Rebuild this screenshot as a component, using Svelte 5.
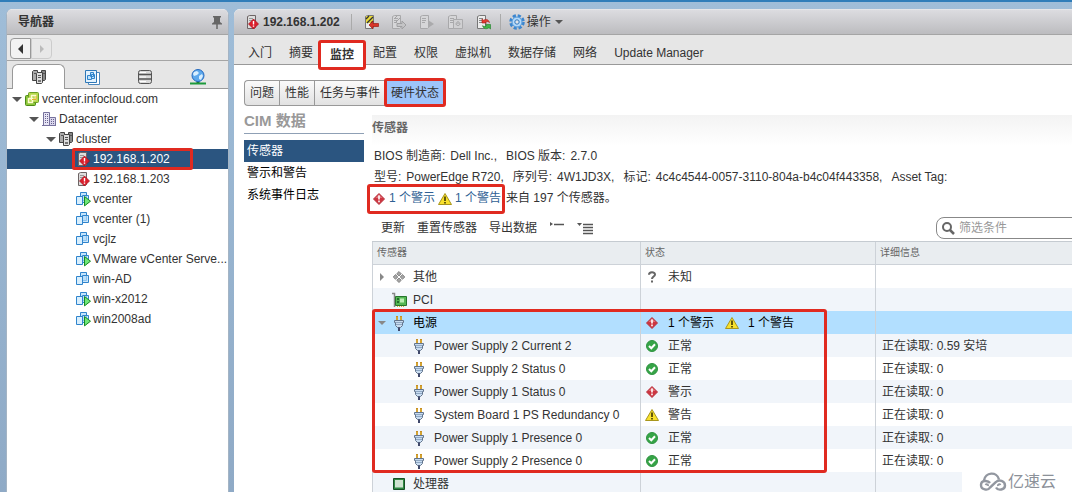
<script lang="ts">
	type TreeNode = {
		name: string;
		icon: string;
		level: number;
		open?: boolean;
	};

	type Sensor = {
		name: string;
		icon: string;
		child?: boolean;
		open?: boolean;
		status: { icon: string; text: string }[];
		detail?: string;
	};

	let selectedNode = $state('192.168.1.202');
	let selectedView = $state('传感器');
	let activeTab = $state('监控');
	let activeSub = $state('硬件状态');
	let activeNav = $state('hosts');
	let selectedSensor = $state('电源');
	let filter = $state('');

	const navTabs = [
		{ id: 'hosts', icon: 'cluster', label: '主机和群集' },
		{ id: 'vms', icon: 'vms', label: '虚拟机和模板' },
		{ id: 'storage', icon: 'storage', label: '存储' },
		{ id: 'network', icon: 'network', label: '网络' }
	];

	const tree: TreeNode[] = [
		{ name: 'vcenter.infocloud.com', icon: 'vcenter', level: 0, open: true },
		{ name: 'Datacenter', icon: 'datacenter', level: 1, open: true },
		{ name: 'cluster', icon: 'cluster', level: 2, open: true },
		{ name: '192.168.1.202', icon: 'host', level: 3 },
		{ name: '192.168.1.203', icon: 'host', level: 3 },
		{ name: 'vcenter', icon: 'vm-on', level: 3 },
		{ name: 'vcenter (1)', icon: 'vm', level: 3 },
		{ name: 'vcjlz', icon: 'vm', level: 3 },
		{ name: 'VMware vCenter Serve...', icon: 'vm-on', level: 3 },
		{ name: 'win-AD', icon: 'vm', level: 3 },
		{ name: 'win-x2012', icon: 'vm-on', level: 3 },
		{ name: 'win2008ad', icon: 'vm-on', level: 3 }
	];

	const actions = [
		{ icon: 'maint-enter', label: '进入维护模式' },
		{ icon: 'maint-exit', label: '退出维护模式' },
		{ icon: 'power-on', label: '打开电源' },
		{ icon: 'power-off', label: '关机' },
		{ icon: 'reboot', label: '重新引导' }
	];

	const tabs = ['入门', '摘要', '监控', '配置', '权限', '虚拟机', '数据存储', '网络', 'Update Manager'];
	const subTabs = ['问题', '性能', '任务与事件', '硬件状态'];
	const views = ['传感器', '警示和警告', '系统事件日志'];

	const ok = [{ icon: 'ok', text: '正常' }];

	const sensors: Sensor[] = [
		{ name: '其他', icon: 'other', open: false, status: [{ icon: 'unknown', text: '未知' }] },
		{ name: 'PCI', icon: 'pci', status: [] },
		{
			name: '电源',
			icon: 'plug',
			open: true,
			status: [
				{ icon: 'alert', text: '1 个警示' },
				{ icon: 'warning', text: '1 个警告' }
			]
		},
		{ name: 'Power Supply 2 Current 2', icon: 'plug', child: true, status: ok, detail: '正在读取: 0.59 安培' },
		{ name: 'Power Supply 2 Status 0', icon: 'plug', child: true, status: ok, detail: '正在读取: 0' },
		{
			name: 'Power Supply 1 Status 0',
			icon: 'plug',
			child: true,
			status: [{ icon: 'alert', text: '警示' }],
			detail: '正在读取: 0'
		},
		{
			name: 'System Board 1 PS Redundancy 0',
			icon: 'plug',
			child: true,
			status: [{ icon: 'warning', text: '警告' }],
			detail: '正在读取: 0'
		},
		{ name: 'Power Supply 1 Presence 0', icon: 'plug', child: true, status: ok, detail: '正在读取: 0' },
		{ name: 'Power Supply 2 Presence 0', icon: 'plug', child: true, status: ok, detail: '正在读取: 0' },
		{ name: '处理器', icon: 'cpu', status: [] }
	];
</script>

{#snippet squares()}
	<g stroke="#2f84cc">
		<path d="M5.5 1.5h6v8h-6z" fill="#c4e4fb" />
		<path d="M1.5 5.5h6v8h-6z" fill="#d8eefc" />
		<path d="M7.5 4.5h6v7h-6z" fill="#b3dbfa" fill-opacity=".7" />
	</g>
{/snippet}

{#snippet server()}
	<path d="M2.5 2.5l2-1h6v12l-1 1h-7z" fill="#ececec" stroke="#777" />
	<path d="M4 4.5h4M4 6.5h4M4 8.5h3" stroke="#888" />
{/snippet}

{#snippet paleServer()}
	<path d="M1.5 2.5l2-1h6v12l-1 1h-7z" fill="#d6d6d8" stroke="#a8a8aa" />
	<path d="M3 4.5h4M3 6.5h4M3 8.5h3" stroke="#a8a8aa" />
{/snippet}

{#snippet icon(name: string)}
	<svg class="icon" viewBox="0 0 16 16" width="16" height="16" fill="none" aria-hidden="true">
		{#if name === 'host'}
			<path d="M3.5 2.5l2-1h6v12l-1 1h-7z" fill="#ddd" stroke="#6d6464" />
			<path d="M5 4.5h4M5 6.5h4" stroke="#999" />
			<path d="M9.500 5l5 5-5 5-5-5z" fill="#dc1f2c" stroke="#a30f1b" stroke-width=".7" />
			<path d="M8.800 7h1.400v3.500H8.800zM8.800 11.500h1.400v1.300H8.800z" fill="#fff" />
		{:else if name === 'vm' || name === 'vm-on'}
			{@render squares()}
			{#if name === 'vm-on'}
				<path d="M9.5 5.500l6 4.700-6 4.700z" fill="#6fe578" stroke="#168a24" />
			{/if}
		{:else if name === 'vcenter'}
			<rect x="1.500" y="4.500" width="10" height="10" rx="1" fill="#8cc63a" stroke="#4c8a17" />
			<rect x="4.500" y="1.500" width="10" height="10" rx="1" fill="#b5d84c" stroke="#6b9e24" />
			<path d="M7.500 4.500h4v4h-4zM4.500 7.500h4v4h-4z" stroke="#fffbd0" stroke-width="1.500" />
			<path d="M8 8.500h4v-3.500" stroke="#e7a92b" />
		{:else if name === 'datacenter'}
			<path d="M2.500 1.500h6v13h-6z" fill="#e7e5f5" stroke="#77729d" />
			<path d="M8.500 6.500h6v8h-6z" fill="#d9d6ec" stroke="#77729d" />
			<path d="M4.500 3v10M6.500 3v10M10.500 8v5M12.500 8v5" stroke="#68628f" stroke-dasharray="1 1" />
			<path d="M1 14.500h14" stroke="#77729d" />
		{:else if name === 'cluster'}
			<g stroke="#444">
				<path d="M1.500 2.500l1-1h4v9l-1 1h-4z" fill="#aaa" />
				<path d="M10.500 1.500h4v9l-1 1h-3z" fill="#888" />
				<path d="M5.500 4.500l1-1h5v10l-1 1h-5z" fill="#ddd" />
			</g>
			<path d="M7 6.500h3M7 8.500h3M3 4.500h2M12 4.500h2" stroke="#555" />
			<path d="M7 11h3v2H7z" fill="#777" />
		{:else if name === 'vms'}
			<path d="M4.500 3.500h11v12h-11z" fill="#fff" stroke="#4a87bd" />
			<path d="M1.500 1.500h11v12h-11z" fill="#e3f2fd" stroke="#2f78b7" />
			<path d="M6.500 3.500h3v4h-3zM3.500 6.500h4v4h-4zM7.500 5.500h3v4h-3z" fill="#bfe2fb" stroke="#2f84cc" />
		{:else if name === 'storage'}
			<rect x="1.500" y="1.500" width="13" height="13" rx="2" fill="#d9d9d9" stroke="#555" />
			<path d="M2 5.500h12M2 10h12" stroke="#555" stroke-width="1.500" />
			<path d="M3 3.500h6M3 8h6M3 12.500h6" stroke="#fff" />
		{:else if name === 'network'}
			<path d="M0 14.500h16" stroke="#1d9a3c" stroke-width="2" />
			<path d="M8 11v3" stroke="#1d7a3c" stroke-width="3" />
			<circle cx="8" cy="6.500" r="6" fill="#5da8ec" stroke="#2468bd" />
			<path d="M4 3l3-1 2 2-2 2-3 1-1-2zM9 7l3-2 1 2-2 4-2-1z" fill="#d9efff" />
		{:else if name === 'alert'}
			<path d="M8 2.500L13.500 8 8 13.500 2.500 8z" fill="#cd3540" stroke="#b8323c" />
			<path d="M8 3.500L11.500 7h-7z" fill="#e2737a" />
			<path d="M7.200 4.500h1.600v4H7.200zM7.200 9.500h1.600v1.700H7.200z" fill="#fff" />
		{:else if name === 'warning'}
			<path d="M8 2.500l6.500 11h-13z" fill="#f8e02c" stroke="#a8961c" stroke-linejoin="round" />
			<path d="M7.200 5.500h1.600v4.500H7.200zM7.200 11h1.600v1.500H7.200z" fill="#3d3500" />
		{:else if name === 'ok'}
			<circle cx="8" cy="8" r="5.500" fill="#36a447" stroke="#2f9441" />
			<path d="M5 8l2.300 2.300 3.700-4" stroke="#fff" stroke-width="2" />
		{:else if name === 'unknown'}
			<path d="M5 5.800C5 2.500 11 2.500 11 5.500 11 7.500 8 7.500 8 10" stroke="#666" stroke-width="2" />
			<path d="M7 11.500h2v2H7z" fill="#666" />
		{:else if name === 'other'}
			<path d="M8 2.500l2.300 2.300L8 7 5.700 4.800zM8 9l2.300 2.300L8 13.500l-2.300-2.200zM4.500 5.500L6.800 8l-2.300 2.300L2.200 8zM11.500 5.500L13.800 8l-2.300 2.300L9.200 8z" fill="#a5a5a5" stroke="#777" stroke-width=".8" />
		{:else if name === 'pci'}
			<path d="M1 1.500h2.500V15" stroke="#888" stroke-width="1.500" />
			<path d="M4.500 4.500h11v9h-11z" fill="#55b753" stroke="#26752b" />
			<path d="M9 6.500h4v4H9z" fill="#b9eeb1" />
			<path d="M6 6h2v2H6zM6 9h2v2H6z" fill="#236b2b" />
			<path d="M6 14.500h8" stroke="#d2b33b" stroke-dasharray="1 1" />
		{:else if name === 'plug'}
			<path d="M6 1v5M10 1v5" stroke="#b77a12" stroke-width="2" />
			<path d="M6 1.500v4M10 1.500v4" stroke="#f2cd52" />
			<path d="M3.500 5.500h9v2h-1v3l-2 2h-3l-2-2v-3h-1z" fill="#c9dcf0" stroke="#62748c" />
			<path d="M5 7.500h6M5 9.500h6" stroke="#8fa8c4" />
			<path d="M8 12.500V16" stroke="#40486a" stroke-width="2" />
		{:else if name === 'cpu'}
			<path d="M2.500 2.500h11v11h-11z" fill="#2e8742" stroke="#174f25" />
			<path d="M4 4h8v7.500H4z" fill="#cfe3d1" />
		{:else if name === 'maint-enter'}
			{@render server()}
			<path d="M3 2h7v7H3z" fill="#e9d93a" />
			<path d="M3 5l3-3M4 9l6-6M8 9l2-2" stroke="#333" stroke-width="1.300" />
			<path d="M6 11l4-4v2.500h5.500v3H10V15z" fill="#d73528" stroke="#9c1d14" stroke-width=".7" />
		{:else if name === 'maint-exit'}
			{@render paleServer()}
			<path d="M3 5l3-3M4 9l5-5" stroke="#a2a2a4" />
			<path d="M15 11l-4-4v2.500H6v3h5V15z" fill="#c4c4c6" stroke="#9f9fa1" />
		{:else if name === 'power-on'}
			{@render paleServer()}
			<path d="M9 6l6 4-6 4z" fill="#aaaaac" />
		{:else if name === 'power-off'}
			{@render paleServer()}
			<path d="M6.500 5.500h9v9h-9z" fill="#d0d0d2" stroke="#ababad" />
			<path d="M9.500 8.500c-2 4 5 4 3 0M11 7v3" stroke="#9f9fa1" />
		{:else if name === 'reboot'}
			{@render server()}
			<path d="M7 9V5l1.500 1.200c3-2 5.500 0 6 2.300-2-1.500-3-1.200-4 0L11.500 9z" fill="#e23b30" stroke="#a81d14" stroke-width=".6" />
			<path d="M15.500 10.500V15l-1.500-1.300c-3 2-5.500 1-6.500-2 2 1.200 3 1 4-.2l-1-1z" fill="#42b548" stroke="#1c7d25" stroke-width=".6" />
		{:else if name === 'gear'}
			<circle cx="8" cy="8" r="6.500" stroke="#3b86cf" stroke-width="2.500" stroke-dasharray="3.200 1.900" />
			<circle cx="8" cy="8" r="5" fill="#b5dafa" stroke="#4a95da" />
			<circle cx="8" cy="8" r="2.200" fill="#e0e4ea" stroke="#2e78bf" />
		{:else if name === 'pin'}
			<path d="M4 2h8v1.500h-1V8l2 1.500v1H3v-1L5 8V3.500H4z" fill="#666" />
			<path d="M8 10v5" stroke="#666" stroke-width="1.500" />
		{:else if name === 'search'}
			<circle cx="7" cy="7" r="4" stroke="#666" stroke-width="2" />
			<path d="M10 10l4 4" stroke="#666" stroke-width="2.500" />
		{:else if name === 'collapse'}
			<path d="M1 2l3 2-3 2z" fill="#555" />
			<path d="M5 4.500h10" stroke="#555" stroke-width="1.500" />
		{:else if name === 'expand'}
			<path d="M0 3h5L2.500 6z" fill="#555" />
			<path d="M6 4.500h10M6 7.500h10M6 10.500h10M6 13.500h10" stroke="#555" stroke-width="1.500" />
		{/if}
	</svg>
{/snippet}

<div class="app">
	<aside class="panel navigator">
		<header class="panel-header">
			<h2>导航器</h2>
			<button class="plain" aria-label="固定">{@render icon('pin')}</button>
		</header>
		<div class="history">
			<button aria-label="后退"><span class="tri left"></span></button>
			<button aria-label="前进" disabled><span class="tri right"></span></button>
		</div>
		<nav class="nav-tabs">
			{#each navTabs as tab}
				<button class:active={activeNav === tab.id} aria-label={tab.label} onclick={() => (activeNav = tab.id)}>
					{@render icon(tab.icon)}
				</button>
			{/each}
		</nav>
		<ul class="tree">
			{#each tree as node}
				<li class="level-{node.level}" class:selected={selectedNode === node.name}>
					{#if node.open}
						<button class="plain toggle" aria-label="折叠 {node.name}"><span class="tri down"></span></button>
					{/if}
					<a href="#{node.name}" class:marked={selectedNode === node.name} onclick={() => (selectedNode = node.name)}>
						{@render icon(node.icon)}
						<span>{node.name}</span>
					</a>
				</li>
			{/each}
		</ul>
	</aside>

	<main class="panel">
		<header class="panel-header object-header">
			<div class="object-title">
				{@render icon('host')}
				<h1>192.168.1.202</h1>
			</div>
			<div class="actions">
				{#each actions as action}
					<button class="plain" aria-label={action.label}>{@render icon(action.icon)}</button>
				{/each}
			</div>
			<button class="plain action-menu">{@render icon('gear')}操作<span class="tri down"></span></button>
		</header>

		<nav class="tabs">
			{#each tabs as tab}
				<button class:active={activeTab === tab} onclick={() => (activeTab = tab)}>{tab}</button>
			{/each}
		</nav>

		<nav class="sub-tabs">
			{#each subTabs as tab}
				<button class:active={activeSub === tab} onclick={() => (activeSub = tab)}>{tab}</button>
			{/each}
		</nav>

		<div class="body">
			<section class="views">
				<h2>CIM 数据</h2>
				<ul>
					{#each views as view}
						<li>
							<a href="#{view}" class:selected={selectedView === view} onclick={() => (selectedView = view)}>{view}</a>
						</li>
					{/each}
				</ul>
			</section>

			<section class="content">
				<h3>传感器</h3>
				<div class="info">
					<p><span>BIOS 制造商:</span> <span>Dell Inc.,</span> <span class="next">BIOS 版本:</span> <span>2.7.0</span></p>
					<p>
						<span>型号:</span> <span>PowerEdge R720,</span>
						<span class="next">序列号:</span> <span>4W1JD3X,</span>
						<span class="next">标记:</span> <span>4c4c4544-0057-3110-804a-b4c04f443358,</span>
						<span class="next">Asset Tag:</span>
					</p>
					<p class="summary">
						<span class="counts">
							{@render icon('alert')}<a href="#alerts">1 个警示</a>
							{@render icon('warning')}<a href="#warnings">1 个警告</a>
						</span>
						来自 197 个传感器。
					</p>
				</div>

				<div class="toolbar">
					<button class="plain">更新</button>
					<button class="plain">重置传感器</button>
					<button class="plain">导出数据</button>
					<button class="plain" aria-label="全部折叠">{@render icon('collapse')}</button>
					<button class="plain" aria-label="全部展开">{@render icon('expand')}</button>
					<label class="search">
						{@render icon('search')}
						<input type="text" placeholder="筛选条件" aria-label="筛选条件" bind:value={filter} />
					</label>
				</div>

				<div class="table-wrap">
					<table>
						<colgroup>
							<col class="col-name" />
							<col class="col-status" />
							<col />
						</colgroup>
						<thead>
							<tr><th>传感器</th><th>状态</th><th>详细信息</th></tr>
						</thead>
						<tbody>
							{#each sensors as sensor}
								<tr class:selected={selectedSensor === sensor.name} onclick={() => (selectedSensor = sensor.name)}>
									<td>
										<div class="cell name" class:child={sensor.child}>
											{#if !sensor.child}
												<span class="twisty">
													{#if sensor.open !== undefined}
														<button class="plain" aria-label="展开 {sensor.name}">
															<span class="tri {sensor.open ? 'down' : 'right'}"></span>
														</button>
													{/if}
												</span>
											{/if}
											{@render icon(sensor.icon)}
											<span>{sensor.name}</span>
										</div>
									</td>
									<td>
										<div class="cell">
											{#each sensor.status as status}
												{@render icon(status.icon)}
												<span class="status">{status.text}</span>
											{/each}
										</div>
									</td>
									<td>{sensor.detail ?? ''}</td>
								</tr>
							{/each}
						</tbody>
					</table>
					<div class="highlight"></div>
				</div>
			</section>
		</div>
	</main>

	<div class="watermark">
		<svg viewBox="0 0 28 20" width="28" height="20" fill="none" stroke="#9297a0" stroke-width="2.400" aria-hidden="true">
			<path d="M11 11C9 8 2 8 2 13s7 6 9 2.500L17 10c3-3 9-1 9 3.500s-7 5.500-9 2" />
			<path d="M5 8.500C6 0 18-1 20 7.500" />
			<path d="M6.500 13c1-1.500 3-.5 2.500 1M21.500 13c-1-1.500-3-.5-2.500 1" stroke-width="2" />
		</svg>
		<span>亿速云</span>
	</div>
</div>

<style>
	:global(body) {
		margin: 0;
		overflow: hidden;
	}
	.app {
		position: relative;
		box-sizing: border-box;
		height: 100vh;
		display: grid;
		grid-template-columns: 223px 1fr;
		gap: 5px;
		padding: 7px 0 0 6px;
		border-top: 2px solid #2f7db9;
		overflow: hidden;
		background: linear-gradient(#9fbdd8, #8faac6);
		font-family: 'Liberation Sans', 'Noto Sans CJK SC', sans-serif;
		font-size: 12px;
		line-height: 20px;
		color: #333;
	}
	h1,
	h2,
	h3,
	p,
	ul {
		margin: 0;
		padding: 0;
		font-size: 12px;
		list-style: none;
	}
	a {
		color: inherit;
		text-decoration: none;
	}
	button {
		font: inherit;
		color: inherit;
		cursor: pointer;
	}
	.plain {
		display: flex;
		align-items: center;
		padding: 0;
		border: 0;
		background: none;
	}
	.icon {
		flex: none;
		display: block;
	}

	/* arrows */
	.tri {
		display: block;
		width: 0;
		height: 0;
		border: 0 solid transparent;
	}
	.tri.down {
		border-width: 5px 5px 0;
		border-top-color: #555;
	}
	.tri.left {
		border-width: 5px 5px 5px 0;
		border-right-color: #333;
	}
	.tri.right {
		border-width: 4px 0 4px 4px;
		border-left-color: #888;
	}

	.panel {
		min-width: 0;
		overflow: hidden;
		background: #fff;
		border-radius: 6px 0 0 0;
	}
	.panel-header {
		box-sizing: border-box;
		display: flex;
		align-items: center;
		height: 26px;
		border-top: 1px solid #e5e5e8;
		border-bottom: 1px solid #a5a5a5;
		background: linear-gradient(#dcdce0, #bcbcbf);
	}

	/* navigator */
	.navigator {
		box-sizing: border-box;
		border-right: 1px solid #a4b4c4;
		border-left: 1px solid #a4b4c4;
		border-radius: 6px 6px 0 0;
	}
	.navigator .panel-header {
		justify-content: space-between;
		padding: 0 3px 0 11px;
	}
	.history {
		box-sizing: border-box;
		display: flex;
		height: 26px;
		padding: 3px;
		border-bottom: 1px solid #a5a5a5;
		background: #e8e8e8;
	}
	.history button {
		box-sizing: border-box;
		display: flex;
		align-items: center;
		justify-content: center;
		width: 21px;
		height: 21px;
		padding: 0;
		border: 1px solid #999;
		border-radius: 4px 0 0 4px;
		background: #f2f2f2;
	}
	.history button:disabled {
		border-color: #ccc;
		border-radius: 0 4px 4px 0;
		background: #e8e8e8;
	}
	.history button:disabled .tri {
		border-left-color: #bbb;
	}
	.nav-tabs {
		box-sizing: border-box;
		display: flex;
		height: 28px;
		padding: 3px 4px 0 5px;
		background: #e6e6e6;
		box-shadow: inset 0 -1px #999;
	}
	.nav-tabs button {
		flex: 1;
		display: flex;
		align-items: center;
		justify-content: center;
		padding: 0;
		border: 1px solid transparent;
		border-bottom: 0;
		background: none;
	}
	.nav-tabs .active {
		border-color: #999;
		border-radius: 6px 6px 0 0;
		background: #fff;
	}
	.tree li {
		display: flex;
		align-items: center;
		height: 20px;
		padding-left: 5px;
	}
	.tree .level-1 {
		padding-left: 22px;
	}
	.tree .level-2 {
		padding-left: 39px;
	}
	.tree .level-3 {
		padding-left: 67px;
	}
	.tree .toggle {
		width: 11px;
	}
	.tree a {
		box-sizing: border-box;
		display: flex;
		align-items: center;
		gap: 2px;
		height: 22px;
		border: 3px solid transparent;
		border-width: 3px 0 3px 1px;
		white-space: nowrap;
	}
	.tree .selected {
		background: #2b5580;
		color: #fff;
	}
	.tree .marked {
		padding-right: 20px;
		border: 3px solid #e02a20;
		border-radius: 2px;
		margin-left: -2px;
	}

	/* object header */
	.object-header {
		padding-left: 10px;
	}
	.object-title {
		display: flex;
		align-items: center;
		gap: 3px;
		padding-right: 11px;
	}
	.actions {
		display: flex;
		gap: 12px;
		padding: 0 9px 0 11px;
		border: 1px solid #aaa;
		border-width: 0 1px;
	}
	.action-menu {
		gap: 2px;
		padding-left: 8px;
	}
	.action-menu .tri {
		margin-left: 2px;
		border-width: 4px 4px 0;
	}

	.tabs {
		box-sizing: border-box;
		display: flex;
		align-items: center;
		gap: 1px;
		height: 30px;
		padding: 5px 0 0 6px;
		background: #e6e6e6;
		box-shadow: inset 0 -1px #999;
	}
	.tabs button {
		padding: 0 8px;
		border: 0;
		background: none;
		white-space: nowrap;
	}
	.tabs .active {
		box-sizing: border-box;
		height: 30px;
		margin: 0 -2px 0 -4px;
		padding: 0 9px;
		border: 3px solid #e02a20;
		border-radius: 3px;
		background: #fff;
		font-weight: bold;
		align-self: flex-start;
	}
	.sub-tabs {
		display: flex;
		padding: 13px 10px 0;
	}
	.sub-tabs button {
		box-sizing: border-box;
		height: 26px;
		margin-top: 2px;
		padding: 0 5px;
		border: 1px solid #999;
		border-width: 1px 0 1px 1px;
		background: linear-gradient(#fafafa, #e2e2e2);
	}
	.sub-tabs button:first-child {
		border-radius: 4px 0 0 4px;
	}
	.sub-tabs .active {
		height: 29px;
		margin: 0 0 0 -1px;
		padding: 0 4px;
		border: 3px solid #e02a20;
		border-radius: 3px;
		background: #9dc4fb;
	}

	.body {
		display: flex;
		gap: 8px;
		padding: 8px 0 0 10px;
	}
	.views {
		flex: none;
		width: 120px;
	}
	.views h2 {
		margin: -4px 0 6px;
		padding-bottom: 2px;
		border-bottom: 1px solid #8fa0b5;
		font-size: 15px;
		color: #999;
	}
	.views a {
		display: block;
		padding-left: 3px;
		line-height: 22px;
		color: #000;
	}
	.views a.selected {
		background: #2b5580;
		color: #fff;
	}
	.content {
		flex: 1;
		min-width: 0;
	}
	.content h3 {
		height: 31px;
		line-height: 26px;
		color: #666;
		background: linear-gradient(#f3f3f3, #fff);
	}
	.info p {
		display: flex;
		gap: 5px;
		padding-left: 2px;
		line-height: 21px;
		white-space: nowrap;
	}
	.info .next {
		margin-left: 4px;
	}
	.info .summary {
		align-items: center;
		gap: 1px;
		height: 21px;
		padding: 0;
	}
	.counts {
		box-sizing: border-box;
		display: flex;
		align-items: center;
		gap: 2px;
		height: 30px;
		margin: -5px 0 -5px -5px;
		padding: 0 1px;
		border: 3px solid #e02a20;
		border-radius: 3px;
		color: #2f5f94;
	}
	.toolbar {
		display: flex;
		align-items: center;
		gap: 12px;
		height: 22px;
		padding: 8px 0 2px 9px;
		overflow: hidden;
		white-space: nowrap;
	}
	.search {
		box-sizing: border-box;
		flex: none;
		display: flex;
		align-items: center;
		gap: 3px;
		width: 150px;
		height: 22px;
		margin: 0 -14px 0 auto;
		padding-left: 3px;
		border: 1px solid #888;
		border-radius: 8px;
		background: #fff;
	}
	.search input {
		flex: 1;
		min-width: 0;
		padding: 0;
		border: 0;
		outline: 0;
		background: none;
		font: inherit;
	}
	.search input::placeholder {
		color: #999;
	}

	/* sensor table */
	.table-wrap {
		position: relative;
	}
	table {
		width: 100%;
		table-layout: fixed;
		border-collapse: separate;
		border-spacing: 0;
		border-top: 1px solid #c5cbd1;
	}
	.col-name {
		width: 268px;
	}
	.col-status {
		width: 235px;
	}
	th,
	td {
		box-sizing: border-box;
		height: 23px;
		padding: 0 6px;
		border-left: 1px solid #cdd2d8;
		text-align: left;
		white-space: nowrap;
	}
	th {
		padding: 0 4px;
		border-bottom: 1px solid #cdd2d8;
		background: #e9edf0;
		font-size: 10px;
		font-weight: normal;
		color: #666;
	}
	tbody tr:nth-child(even) {
		background: #f1f5fa;
	}
	tbody tr.selected {
		background: #b2dfff;
		color: #000;
	}
	.cell {
		display: flex;
		align-items: center;
		margin-left: -3px;
	}
	.status {
		margin: 0 10px 0 8px;
	}
	.name {
		gap: 6px;
		margin-left: 0;
	}
	.name.child {
		padding-left: 32px;
		gap: 7px;
	}
	.twisty {
		flex: none;
		display: flex;
		width: 6px;
		justify-content: center;
	}
	.twisty .down {
		border-width: 4px 4px 0;
		border-top-color: #888;
	}
	.highlight {
		position: absolute;
		top: 68px;
		left: 0;
		box-sizing: border-box;
		width: 455px;
		height: 164px;
		border: 3px solid #e02a20;
		border-radius: 3px;
		pointer-events: none;
	}

	.watermark {
		position: absolute;
		right: 0;
		bottom: 0;
		box-sizing: border-box;
		display: flex;
		align-items: center;
		gap: 1px;
		height: 20px;
		padding: 0 16px 0 17px;
		background: #fff;
		font-size: 16px;
		color: #8c9199;
	}
</style>
